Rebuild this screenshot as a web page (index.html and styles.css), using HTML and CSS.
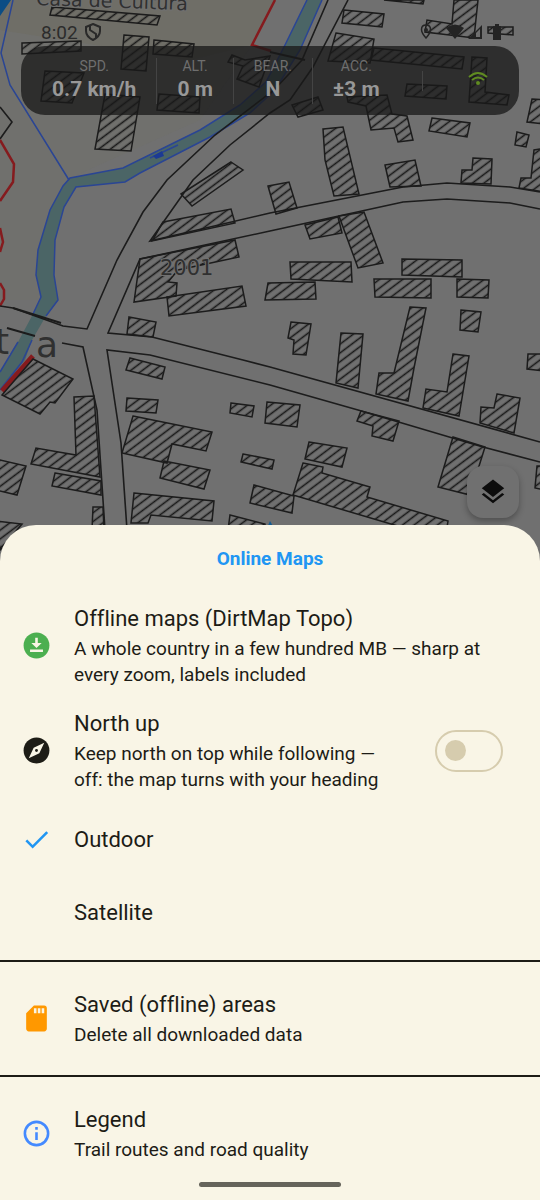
FILE: index.html
```
<!DOCTYPE html>
<html lang="en">
<head>
    <meta charset="UTF-8">
    <meta name="viewport" content="width=device-width, initial-scale=1.0">
    <title>DirtMap - Online Maps</title>
    <link rel="stylesheet" href="styles.css">
</head>
<body>
    <main class="map">
        <svg class="map-canvas" viewBox="0 0 540 561" preserveAspectRatio="xMidYMin slice" aria-hidden="true">
            <defs>
                <pattern id="hatch" width="7" height="7" patternUnits="userSpaceOnUse" patternTransform="rotate(-37)">
                    <path d="M0 3.500H7" stroke="#181818" stroke-width="1.6"/>
                </pattern>
            </defs>
            <!-- park tint and water -->
            <path fill="#70706d" d="M0 0H275L252 45L200 120L70 178L45 230L38 300L0 300Z"/>
            <path fill="#6f6e67" d="M0 0H275L252 45L190 60L0 30Z"/>
            <path fill="#0b4d85" d="M0 0H11L0 16Z"/>
            <path fill="#4b6566" d="M307 0L285 45L266 82L240 105L200 130L123 168L70 178L63 186L50 210L38 250L36 275L41 297L33 314L18 342L0 372V390L25 360L32 340L46 316L58 300L54 275L55 240L64 207L76 187L125 182L140 173L210 137L250 113L275 90L300 50L322 0Z"/>
            <g class="stream">
                <path d="M307 0L285 45L266 82L240 105L200 130L123 168L70 178L63 186L50 210L38 250L36 275L41 297L33 314"/>
                <path d="M322 0L300 50L275 90L250 113L210 137L140 173L125 182L76 187L64 207L55 240L54 275L58 300L46 316"/>
                <path d="M13 0L1 53L10 85L69 180M32 340L22 362L0 390M18 342L0 372"/>
                <path d="M150 158L178 145"/>
            </g>
            <path fill="#1c3a94" d="M153 156L162 151L164 156L156 159Z"/>
            <!-- trails -->
            <g class="trail">
                <path d="M275 0L252 45L271 51M0 140L14 164L13 182L0 201M0 228L3 242L0 252M0 283L4 290L4 299L0 306"/>
                <path stroke-width="5" d="M2 391L33 356"/>
            </g>
            <!-- roads -->
            <g class="road">
                <path d="M328 0L302 60L274 90L215 135L167 180L143 212L117 260L87 329L63 326L13 308L0 306"/>
                <path d="M348 0L313 67L290 100L270 113L230 145L193 180L150 241L270 213L403 187L447 183L510 187L540 192"/>
                <path d="M540 209L510 203L447 199L403 202L270 231L140 259L108 333L152 337L243 360L270 367L540 442"/>
                <path d="M62 343L83 347L97 410L105 530"/>
                <path d="M127 530L121 443L107 350L150 355L270 385L358 410L483 447L540 462"/>
                <path d="M0 107L12 122L0 139"/>
                <path stroke-width="2" d="M13 308L61 323M7 328L35 336M270 52L305 60"/>
            </g>
            <!-- buildings -->
            <g class="building">
                <path d="M52 7L160 16L157 25L50 15ZM22 43L81 41V51L22 54ZM124 35L149 37L146 71L121 69ZM154 40L194 44L192 57L153 54Z"/>
                <path d="M45 71L84 73L72 103L41 101ZM105 94L140 97L131 151L95 149ZM159 94L200 97L199 113L157 110Z"/>
                <path d="M228 62L232 55L245 60L270 56L259 87L237 79L243 66ZM384 0L424 0L423 4ZM344 10L384 14L382 27L342 23Z"/>
                <path d="M336 33L374 39L370 63L328 61ZM374 48L464 57L462 69L371 60ZM454 0H478L474 38L425 32L427 20L452 24Z"/>
                <path d="M488 27H513V35L488 33ZM472 57L487 58L485 92L509 95L507 105L469 102ZM407 84L447 86L446 99L405 96Z"/>
                <path d="M292 105L318 97L323 110L298 117ZM347 97L387 95L392 114L407 116L413 140L398 142L394 128L371 130L366 106L348 102Z"/>
                <path d="M432 118L470 123L467 137L429 131ZM532 99L545 100V124L527 122ZM517 132L529 135L526 147L515 145Z"/>
                <path d="M323 129L343 127L359 194L334 196L325 160ZM385 165L415 160L421 186L390 187ZM473 158L492 159L491 184L461 183L462 170L472 170Z"/>
                <path d="M519 188L521 178H531L534 150L545 148V192ZM268 186L289 182L297 208L276 214ZM305 225L338 217L342 233L310 239Z"/>
                <path d="M339 216L364 212L383 263L358 268ZM290 262H351L352 282L291 279ZM268 283L315 282L316 299L265 300ZM402 259L462 260V277L402 275Z"/>
                <path d="M374 279H431V298L375 297ZM457 279L489 280L488 298L457 297ZM461 310L481 312L478 332L460 330Z"/>
                <path d="M291 322L311 324L306 355L293 354L294 340L288 338ZM341 333L363 334L358 388L336 383ZM410 307L426 308L414 368L408 401L376 394L379 373H394Z"/>
                <path d="M453 354L469 356L459 416L423 408L426 389L447 392ZM497 394L520 398L514 433L480 423L481 407L494 408ZM528 354H545V371L527 369Z"/>
                <path d="M361 411L399 421L393 441L372 436L373 426L357 421ZM453 437L485 447L470 495L438 487ZM309 442L347 448L342 467L305 459Z"/>
                <path d="M303 463L323 467L322 473L370 487L367 497L448 521L445 540L293 495ZM243 454L274 460L272 469L241 462ZM254 485L294 496L292 513L250 503Z"/>
                <path d="M267 402L300 405L297 427L265 423ZM231 403L254 406L252 417L230 413ZM230 515L265 524V530H228ZM537 466H545V490L535 488Z"/>
                <path d="M33 359L73 379L55 403L50 402L40 414L2 395ZM74 397L94 396L100 477L31 464L36 448L76 455ZM55 473L101 481V495L52 486Z"/>
                <path d="M-4 459L26 466L17 495L-4 490ZM93 507H103L104 530H92ZM-4 521L22 524L0 550ZM130 358L165 367L162 379L126 370ZM127 398L158 400L156 413L126 411Z"/>
                <path d="M133 416L212 432L206 451L172 444L167 463L122 453ZM164 461L210 470L204 489L160 478ZM134 493L214 501L212 521L151 515L148 523H131Z"/>
                <path d="M231 162L243 170L192 206L181 194ZM163 222L231 209L235 223L152 241ZM140 259L235 240L239 257L178 270L168 282L177 283L176 296L134 302Z"/>
                <path d="M167 297L242 286L246 306L169 316ZM129 317L156 322L153 337L127 334Z"/>
            </g>
            <g class="map-label">
                <text x="36" y="5" transform="rotate(2 36 5)" font-size="19">Casa de Cultura</text>
                <text x="160" y="275" font-size="21">2001</text>
                <text x="-5" y="354" font-size="36">t</text>
                <text x="36" y="357" font-size="36">a</text>
            </g>
            <path fill="#135b91" d="M266 530L270 521L275 530Z"/>
        </svg>

        <div class="status-bar">
            <span class="clock">8:02</span>
            <svg class="shield" width="16" height="18" viewBox="0 0 16 18" fill="none" stroke="#292929" stroke-width="2">
                <path d="M8 1L15 4V8C15 12 12 15 8 17C4 15 1 12 1 8V4Z"/>
                <path d="M5 3V7L11 11V15"/>
            </svg>
            <svg class="status-icons" width="84" height="18" viewBox="0 0 84 18" fill="#242424">
                <path fill="none" stroke="#242424" stroke-width="1.5" d="M6 2C3 2 1.500 4 1.500 6.500C1.500 10 6 15 6 15S10.500 10 10.500 6.500C10.500 4 9 2 6 2Z"/>
                <circle cx="6" cy="7" r="2"/>
                <path d="M26 5Q35 -2 44 5L35 16Z"/>
                <path d="M62 2V16H48ZM60 6L56 10V14H60Z" fill-rule="evenodd"/>
                <path d="M73 3H75V1H79V3H81V17H73Z"/>
            </svg>
        </div>

        <section class="hud" aria-label="Ride data">
            <div class="stat"><span class="stat-name">SPD.</span><strong>0.7 km/h</strong></div>
            <div class="stat"><span class="stat-name">ALT.</span><strong>0 m</strong></div>
            <div class="stat"><span class="stat-name">BEAR.</span><strong>N</strong></div>
            <div class="stat"><span class="stat-name">ACC.</span><strong>±3 m</strong></div>
            <div class="signal">
                <svg width="20" height="16" viewBox="0 0 20 16" fill="none" stroke="#608c21" stroke-width="2">
                    <path d="M1 6Q10 -2 19 6M4 9Q10 4 16 9"/>
                    <circle cx="10" cy="12" r="2" fill="#608c21" stroke="none"/>
                </svg>
            </div>
        </section>

        <button class="layers" type="button" aria-label="Map layers">
            <svg width="30" height="30" viewBox="0 0 24 24" fill="#0c0c0c">
                <path d="M11.990 18.540L4.620 12.810L3 14.070L12 21.070L21 14.070L19.370 12.800ZM12 16L19.360 10.270L21 9L12 2L3 9L4.630 10.270Z"/>
            </svg>
        </button>
    </main>

    <section class="sheet">
        <h1>Online Maps</h1>

        <button class="row row-tall" type="button">
            <svg class="icon" viewBox="0 0 24 24" fill="#4caf50">
                <circle cx="12" cy="12" r="10"/>
                <path fill="#f9f5e6" d="M11 6H13V10H16L12 14L8 10H11ZM7 15H17V17H7Z"/>
            </svg>
            <span class="text">
                <span class="title">Offline maps (DirtMap Topo)</span>
                <span class="note">A whole country in a few hundred MB — sharp at every zoom, labels included</span>
            </span>
        </button>

        <label class="row row-tall">
            <svg class="icon" viewBox="0 0 24 24" fill="#1d1c16">
                <circle cx="12" cy="12" r="10"/>
                <path fill="#f9f5e6" d="M18 6L14.200 14.200L6 18L9.800 9.800Z"/>
                <circle cx="12" cy="12" r="1.100"/>
            </svg>
            <span class="text">
                <span class="title">North up</span>
                <span class="note">Keep north on top while following — off: the map turns with your heading</span>
            </span>
            <input class="switch" type="checkbox" role="switch">
        </label>

        <label class="row">
            <input class="pick" type="radio" name="layer" checked>
            <svg class="icon" viewBox="0 0 24 24" fill="#2196f3">
                <path d="M9 16.170L4.830 12L3.410 13.410L9 19L21 7L19.590 5.590Z"/>
            </svg>
            <span class="title">Outdoor</span>
        </label>

        <label class="row">
            <input class="pick" type="radio" name="layer">
            <svg class="icon" viewBox="0 0 24 24" fill="#2196f3">
                <path d="M9 16.170L4.830 12L3.410 13.410L9 19L21 7L19.590 5.590Z"/>
            </svg>
            <span class="title">Satellite</span>
        </label>

        <hr>

        <button class="row row-medium" type="button">
            <svg class="icon" viewBox="0 0 24 24" fill="#ff9800">
                <path fill-rule="evenodd" d="M18 2H10L4 8V20C4 21.100 4.900 22 6 22H18C19.100 22 20 21.100 20 20V4C20 2.900 19.100 2 18 2ZM10 4H12V8H10ZM13 4H15V8H13ZM16 4H18V8H16Z"/>
            </svg>
            <span class="text">
                <span class="title">Saved (offline) areas</span>
                <span class="note">Delete all downloaded data</span>
            </span>
        </button>

        <hr>

        <button class="row row-medium" type="button">
            <svg class="icon" viewBox="0 0 24 24" fill="#448aff">
                <circle cx="12" cy="12" r="9" fill="none" stroke="#448aff" stroke-width="2"/>
                <path d="M11 7H13V9H11ZM11 11H13V17H11Z"/>
            </svg>
            <span class="text">
                <span class="title">Legend</span>
                <span class="note">Trail routes and road quality</span>
            </span>
        </button>

        <div class="home-bar"></div>
    </section>
</body>
</html>
```
FILE: styles.css
```
* {
    box-sizing: border-box;
}
body {
    margin: 0;
    min-height: 100vh;
    display: flex;
    flex-direction: column;
    font-family: Roboto, "Noto Sans", sans-serif;
    font-variant-ligatures: none;
    color: #1d1c16;
    background-color: #707070;
}
button {
    border: none;
    background: none;
    padding: 0;
    font: inherit;
    font-variant-ligatures: none;
    color: inherit;
    text-align: left;
    cursor: pointer;
}

/* map */
.map {
    position: relative;
    flex: 1;
    min-height: 300px;
    padding: 20px 21px;
    overflow: hidden;
}
.map-canvas {
    position: absolute;
    inset: 0;
    width: 100%;
    height: 100%;
}
.stream {
    fill: none;
    stroke: #2a4594;
    stroke-width: 1.5;
}
.trail {
    fill: none;
    stroke: #851b1e;
    stroke-width: 2.5;
}
.road {
    fill: none;
    stroke: #1c1c1c;
    stroke-width: 1.6;
}
.building {
    fill: url(#hatch);
    stroke: #1c1c1c;
    stroke-width: 1.5;
}
.map-label {
    font-family: "DejaVu Sans", sans-serif;
    fill: #303030;
    stroke: #707070;
    stroke-width: 2px;
    paint-order: stroke;
}

.status-bar {
    position: relative;
    display: flex;
    align-items: center;
    gap: 7px;
    height: 24px;
    padding-left: 20px;
    padding-right: 15px;
}
.clock {
    font-size: 19px;
    color: #2c2c2c;
}
.status-icons {
    margin-left: auto;
}

.hud {
    position: relative;
    display: flex;
    align-items: center;
    height: 69px;
    margin-top: 2px;
    padding: 0 11px;
    border-radius: 24px;
    background-color: rgba(25, 25, 25, 0.76);
    color: #989898;
}
.stat {
    display: flex;
    flex-direction: column;
    align-items: center;
    padding: 0 20px;
}
.stat + .stat {
    border-left: 1px solid #444;
}
.stat-name {
    font-size: 14px;
    line-height: 16px;
    color: #6f6f6f;
}
.stat strong {
    font-size: 21px;
    line-height: 30px;
}
.signal {
    margin-left: auto;
    padding: 0 20px 0 45px;
    border-left: 1px solid #444;
}

.layers {
    position: absolute;
    right: 21px;
    bottom: 43px;
    display: flex;
    align-items: center;
    justify-content: center;
    width: 52px;
    height: 52px;
    border-radius: 16px;
    background-color: #707070;
    box-shadow: 0 3px 6px rgba(0, 0, 0, 0.3);
}

/* bottom sheet */
.sheet {
    position: relative;
    display: flex;
    flex-direction: column;
    margin-top: -36px;
    border-radius: 36px 36px 0 0;
    background-color: #f9f5e6;
}
h1 {
    margin: 0;
    font-size: 19px;
    line-height: 68px;
    text-align: center;
    color: #2196f3;
}
.row {
    display: flex;
    align-items: center;
    gap: 22px;
    min-height: 73px;
    padding: 0 37px 0 21px;
    cursor: pointer;
}
.row-medium {
    min-height: 91px;
}
.row-tall {
    min-height: 105px;
}
.icon {
    flex: none;
    width: 31px;
    height: 31px;
}
.text {
    flex: 1;
    display: flex;
    flex-direction: column;
}
.title {
    font-size: 22px;
    line-height: 30px;
}
.note {
    font-size: 19px;
    line-height: 26px;
}
.text .title {
    margin-bottom: 2px;
}
.pick {
    position: absolute;
    opacity: 0;
}
.pick:not(:checked) + .icon {
    visibility: hidden;
}
.switch {
    appearance: none;
    flex: none;
    display: flex;
    align-items: center;
    width: 68px;
    height: 42px;
    margin: 0 0 0 16px;
    padding: 0 8px;
    border: 2px solid #d6ccae;
    border-radius: 21px;
}
.switch::before {
    content: "";
    width: 21px;
    height: 21px;
    border-radius: 50%;
    background-color: #d6ccae;
}
.switch:checked {
    justify-content: flex-end;
}
hr {
    width: 100%;
    height: 2px;
    margin: 11px 0;
    border: none;
    background-color: #1d1c16;
}
.home-bar {
    align-self: center;
    width: 142px;
    height: 5px;
    margin: 3px 0 13px;
    border-radius: 3px;
    background-color: #66645b;
}
```
